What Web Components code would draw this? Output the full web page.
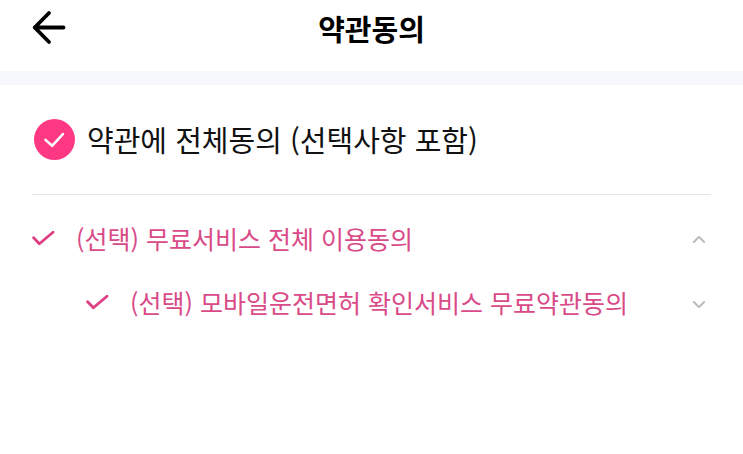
<!DOCTYPE html>
<html lang="ko">
<head>
<meta charset="UTF-8">
<meta name="viewport" content="width=device-width, initial-scale=1">
<title>약관동의</title>
<style>
:root {
    --pink: #ff3884;
    --pink-text: #d94a88;
    --black: #111;
    --band: #f7f8fd;
    --line: #e4e4e4;
    --chevron: #b9b9b9;
}

body {
    margin: 0;
    background-color: #fff;
    color: var(--black);
    font-family: "Noto Sans CJK KR", "Noto Sans", sans-serif;
}
</style>
</head>
<body>
<terms-page>
    <page-header slot="header">약관동의</page-header>
    <agree-check slot="all" variant="all">약관에 전체동의 (선택사항 포함)</agree-check>
    <term-item open>
        <agree-check slot="check">(선택) 무료서비스 전체 이용동의</agree-check>
        <term-item>
            <agree-check slot="check">(선택) 모바일운전면허 확인서비스 무료약관동의</agree-check>
        </term-item>
    </term-item>
</terms-page>

<template id="terms-page">
    <style>
    :host {
        display: block;
    }

    .band {
        height: 14px;
        background-color: var(--band);
    }

    .content {
        padding: 0 32px;
    }

    .all {
        padding: 32px 0 33px;
        border-bottom: 1px solid var(--line);
    }

    .list {
        padding: 11px 0;
    }
    </style>
    <slot name="header"></slot>
    <div class="band"></div>
    <main class="content">
        <div class="all"><slot name="all"></slot></div>
        <div class="list"><slot></slot></div>
    </main>
</template>

<template id="page-header">
    <style>
    :host {
        display: block;
    }

    header {
        display: grid;
        grid-template-columns: 36px 1fr 36px;
        align-items: center;
        padding: 8px 31px 23px;
    }

    button {
        display: flex;
        padding: 0;
        border: none;
        background: none;
        color: #000;
        cursor: pointer;
    }

    h1 {
        margin: 0;
        font-size: 29px;
        font-weight: 700;
        line-height: 40px;
        text-align: center;
        color: #000;
    }
    </style>
    <header>
        <button type="button" aria-label="뒤로">
            <svg width="36" height="36" viewBox="0 0 36 36" fill="none" stroke="currentColor" stroke-width="3.8" stroke-linecap="round" stroke-linejoin="round">
                <path d="M18 3L3.7 17.5L18 32M3.7 17.5H32.5"/>
            </svg>
        </button>
        <h1><slot></slot></h1>
    </header>
</template>

<template id="agree-check">
    <style>
    :host {
        display: block;
        color: var(--pink-text);
    }

    :host([variant="all"]) {
        color: var(--black);
    }

    label {
        display: flex;
        align-items: center;
        gap: 20px;
        font-size: 25px;
        line-height: 44px;
        cursor: pointer;
    }

    .box {
        display: grid;
        flex: none;
        width: 24px;
        height: 24px;
    }

    input, svg {
        grid-area: 1 / 1;
        width: 100%;
        height: 100%;
        margin: 0;
    }

    input {
        appearance: none;
        border-radius: 50%;
        cursor: pointer;
    }

    svg {
        pointer-events: none;
        fill: none;
        stroke: #dd3f82;
        stroke-width: 2.8;
        stroke-linecap: round;
        stroke-linejoin: round;
    }

    input:not(:checked) + svg {
        stroke: #ccc;
    }

    :host([variant="all"]) label {
        gap: 12px;
        padding-left: 2px;
        font-size: 29px;
    }

    :host([variant="all"]) .box {
        width: 41px;
        height: 41px;
    }

    :host([variant="all"]) input {
        background-color: #ddd;
    }

    :host([variant="all"]) input:checked {
        background-color: var(--pink);
    }

    :host([variant="all"]) svg {
        stroke: #fff;
        stroke-width: 1.5;
    }
    </style>
    <label>
        <span class="box">
            <input type="checkbox" checked>
            <svg viewBox="0 0 24 24"><path/></svg>
        </span>
        <span><slot></slot></span>
    </label>
</template>

<template id="term-item">
    <style>
    :host {
        display: block;
    }

    .row {
        display: flex;
        align-items: center;
        justify-content: space-between;
        min-height: 64px;
    }

    button {
        display: flex;
        flex: none;
        padding: 0;
        border: none;
        background: none;
        color: var(--chevron);
        cursor: pointer;
    }

    .up {
        display: none;
    }

    :host([open]) .row .up {
        display: inline;
    }

    :host([open]) .row .down {
        display: none;
    }

    .children {
        display: none;
        padding-left: 54px;
    }

    :host([open]) .children {
        display: block;
    }
    </style>
    <div class="row">
        <slot name="check"></slot>
        <button type="button" aria-label="펼치기">
            <svg width="24" height="24" viewBox="0 0 24 24" fill="none" stroke="currentColor" stroke-width="2" stroke-linecap="round" stroke-linejoin="round">
                <path class="up" d="M6.8 16L12 10.9L17.2 16"/>
                <path class="down" d="M6.8 12L12 17.1L17.2 12"/>
            </svg>
        </button>
    </div>
    <div class="children"><slot></slot></div>
</template>

<script>
class BaseElement extends HTMLElement {
    constructor() {
        super()
        this.attachShadow({mode: 'open'})
        const template = document.getElementById(this.localName)
        this.shadowRoot.appendChild(template.content.cloneNode(true))
    }
}

class TermsPage extends BaseElement {
    connectedCallback() {
        const all = this.querySelector('agree-check[variant="all"]')
        const items = [...this.querySelectorAll('term-item agree-check')]

        this.addEventListener('agree-change', (event) => {
            if (event.target === all) {
                items.forEach(item => item.checked = all.checked)
            } else {
                all.checked = items.every(item => item.checked)
            }
        })
    }
}

class PageHeader extends BaseElement {
    connectedCallback() {
        this.shadowRoot.querySelector('button').addEventListener('click', () => history.back())
    }
}

class AgreeCheck extends BaseElement {
    connectedCallback() {
        const isAll = this.getAttribute('variant') === 'all'
        const path = isAll ? 'M6.7 12.2L10.6 15.7L16.9 8.8' : 'M1.6 11.8L7.4 17.8L21 6.2'

        this.shadowRoot.querySelector('path').setAttribute('d', path)
        this.input.addEventListener('change', () => {
            this.dispatchEvent(new CustomEvent('agree-change', {bubbles: true}))
        })
    }

    get input() {
        return this.shadowRoot.querySelector('input')
    }

    get checked() {
        return this.input.checked
    }

    set checked(value) {
        this.input.checked = value
    }
}

class TermItem extends BaseElement {
    connectedCallback() {
        this.shadowRoot.querySelector('button').addEventListener('click', () => {
            this.toggleAttribute('open')
        })
    }
}

customElements.define('agree-check', AgreeCheck)
customElements.define('term-item', TermItem)
customElements.define('page-header', PageHeader)
customElements.define('terms-page', TermsPage)
</script>
</body>
</html>
